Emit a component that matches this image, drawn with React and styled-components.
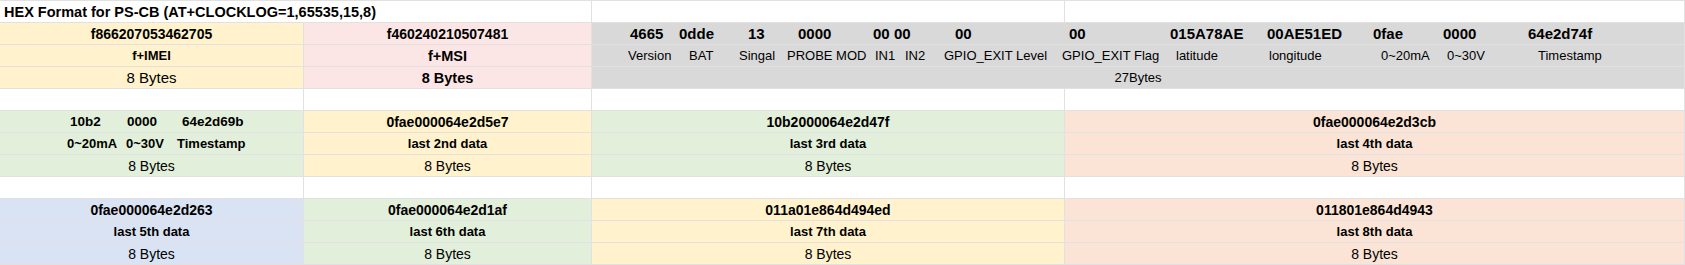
import React from 'react';
import styled, { createGlobalStyle } from 'styled-components';

const GlobalStyle = createGlobalStyle`
  html, body {
    margin: 0;
    padding: 0;
    background: #fff;
  }
  body {
    font-family: "Liberation Sans", Arial, sans-serif;
    color: #000;
  }
`;

const colors = {
  white: '#ffffff',
  yellow: '#fff2cc',
  pink: '#fce6e5',
  gray: '#d9d9d9',
  green: '#e2efda',
  peach: '#fbe4d5',
  blue: '#dae3f3',
};

// [value, value slot width, label, label slot width]
const gpsFields = [
  ['4665', 49, 'Version', 61],
  ['0dde', 69, 'BAT', 50],
  ['13', 50, 'Singal', 48],
  ['0000', 75, 'PROBE MOD', 88],
  ['00', 21, 'IN1', 30],
  ['00', 61, 'IN2', 39],
  ['00', 114, 'GPIO_EXIT Level', 118],
  ['00', 101, 'GPIO_EXIT Flag', 114],
  ['015A78AE', 97, 'latitude', 93],
  ['00AE51ED', 106, 'longitude', 112],
  ['0fae', 70, '0~20mA', 66],
  ['0000', 85, '0~30V', 91],
  ['64e2d74f', 0, 'Timestamp', 0],
];

const history = [
  [
    { bg: 'yellow', value: '0fae000064e2d5e7', label: 'last 2nd data' },
    { bg: 'green', value: '10b2000064e2d47f', label: 'last 3rd data' },
    { bg: 'peach', value: '0fae000064e2d3cb', label: 'last 4th data' },
  ],
  [
    { bg: 'green', value: '0fae000064e2d1af', label: 'last 6th data' },
    { bg: 'yellow', value: '011a01e864d494ed', label: 'last 7th data' },
    { bg: 'peach', value: '011801e864d4943', label: 'last 8th data' },
  ],
];

const App = () => {
  return (
    <>
      <GlobalStyle />
      <Sheet>
        {/* row 1 */}
        <Title $span={2}>HEX Format for PS-CB (AT+CLOCKLOG=1,65535,15,8)</Title>
        <Cell />
        <Cell />

        {/* rows 2-4 : current record */}
        <Cell $bg="yellow"><Value>f866207053462705</Value></Cell>
        <Cell $bg="pink"><Value>f460240210507481</Value></Cell>
        <Cell $bg="gray" $span={2} $pad={38}>
          {gpsFields.map(([v, w], i) => (
            <Slot key={i} $w={w}><Value $size={15}>{v}</Value></Slot>
          ))}
        </Cell>

        <Cell $bg="yellow"><Label $size={13}>f+IMEI</Label></Cell>
        <Cell $bg="pink"><Label $size={14.5}>f+MSI</Label></Cell>
        <Cell $bg="gray" $span={2} $pad={36}>
          {gpsFields.map(([, , label, w]) => (
            <Slot key={label} $w={w}><Small>{label}</Small></Slot>
          ))}
        </Cell>

        <Cell $bg="yellow"><Bytes $size={15}>8 Bytes</Bytes></Cell>
        <Cell $bg="pink"><Bytes $bold>8 Bytes</Bytes></Cell>
        <Cell $bg="gray" $span={2}><Small>27Bytes</Small></Cell>

        {/* row 5 */}
        <Cell /><Cell /><Cell /><Cell />

        {/* rows 6-8 */}
        <Cell $bg="green" $pad={70}>
          <Slot $w={57}><Value $size={13.5}>10b2</Value></Slot>
          <Slot $w={55}><Value $size={13.5}>0000</Value></Slot>
          <Slot><Value $size={13.5}>64e2d69b</Value></Slot>
        </Cell>
        {history[0].map((c) => (
          <Cell key={c.value} $bg={c.bg}><Value>{c.value}</Value></Cell>
        ))}

        <Cell $bg="green" $pad={67}>
          <Slot $w={59}><Label>0~20mA</Label></Slot>
          <Slot $w={51}><Label>0~30V</Label></Slot>
          <Slot><Label>Timestamp</Label></Slot>
        </Cell>
        {history[0].map((c) => (
          <Cell key={c.label} $bg={c.bg}><Label>{c.label}</Label></Cell>
        ))}

        <Cell $bg="green"><Bytes>8 Bytes</Bytes></Cell>
        {history[0].map((c) => (
          <Cell key={c.label + 'b'} $bg={c.bg}><Bytes>8 Bytes</Bytes></Cell>
        ))}

        {/* row 9 */}
        <Cell /><Cell /><Cell /><Cell />

        {/* rows 10-12 */}
        <Cell $bg="blue"><Value>0fae000064e2d263</Value></Cell>
        {history[1].map((c) => (
          <Cell key={c.value} $bg={c.bg}><Value>{c.value}</Value></Cell>
        ))}

        <Cell $bg="blue"><Label>last 5th data</Label></Cell>
        {history[1].map((c) => (
          <Cell key={c.label} $bg={c.bg}><Label>{c.label}</Label></Cell>
        ))}

        <Cell $bg="blue"><Bytes>8 Bytes</Bytes></Cell>
        {history[1].map((c) => (
          <Cell key={c.label + 'b'} $bg={c.bg}><Bytes>8 Bytes</Bytes></Cell>
        ))}
      </Sheet>
    </>
  );
};

export default App;

const Sheet = styled.div`
  display: grid;
  grid-template-columns: 303px 287px 472px 619px;
  grid-auto-rows: 21px;
  gap: 1px;
  padding: 1px 1px 1px 0;
  width: 1685px;
  box-sizing: border-box;
  background: #e1e1e1;
`;

const Cell = styled.div`
  grid-column: span ${(p) => p.$span || 1};
  background: ${(p) => colors[p.$bg || 'white']};
  display: flex;
  align-items: center;
  justify-content: ${(p) => (p.$pad ? 'flex-start' : 'center')};
  padding-left: ${(p) => p.$pad || 0}px;
  overflow: hidden;
  white-space: nowrap;
`;

const Title = styled(Cell)`
  justify-content: flex-start;
  padding-left: 4px;
  font-size: 14.5px;
  font-weight: 700;
`;

const Slot = styled.div`
  flex-shrink: 0;
  width: ${(p) => (p.$w ? `${p.$w}px` : 'auto')};
  display: flex;
`;

const Value = styled.span`
  font-size: ${(p) => p.$size || 14}px;
  font-weight: 700;
`;

const Label = styled.span`
  font-size: ${(p) => p.$size || 13}px;
  font-weight: 700;
`;

const Small = styled.span`
  font-size: ${(p) => p.$size || 13}px;
`;

const Bytes = styled.span`
  font-size: ${(p) => p.$size || (p.$bold ? 14.5 : 14)}px;
  font-weight: ${(p) => (p.$bold ? 700 : 400)};
`;
